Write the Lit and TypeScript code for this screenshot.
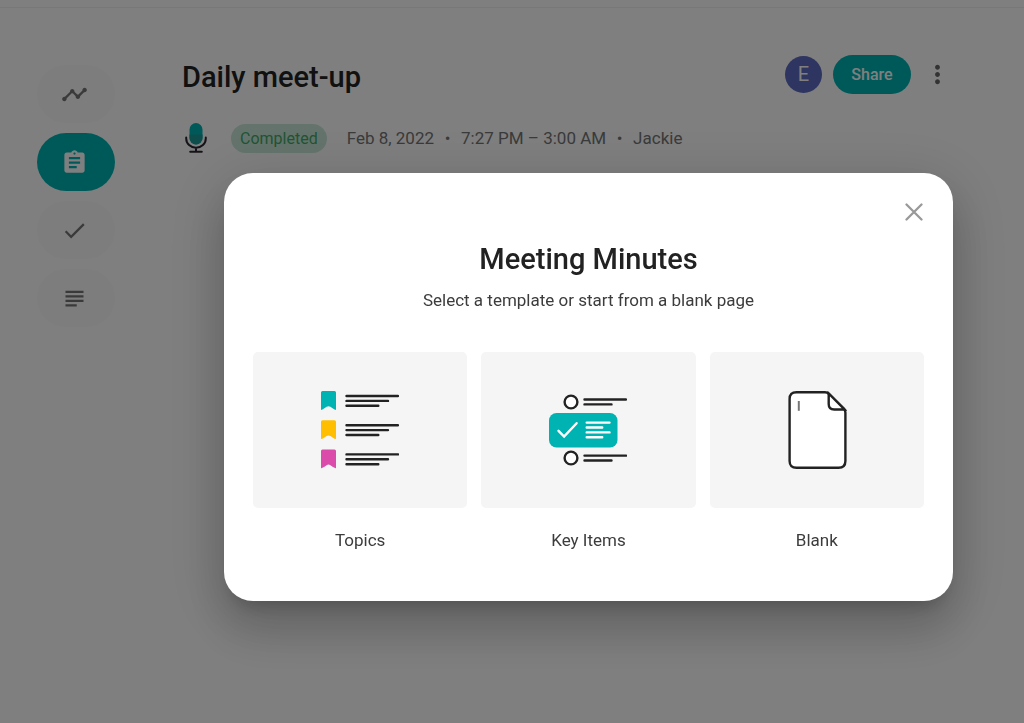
import { LitElement, html, css, svg } from "lit";
import { customElement, property } from "lit/decorators.js";

const navItems = [
  { label: "Insights", d: "M23 8c0 1.1-.9 2-2 2-.18 0-.35-.02-.51-.07l-3.56 3.55c.05.16.07.34.07.52 0 1.1-.9 2-2 2s-2-.9-2-2c0-.18.02-.36.07-.52l-2.55-2.55c-.16.05-.34.07-.52.07s-.36-.02-.52-.07l-4.55 4.56c.05.16.07.33.07.51 0 1.1-.9 2-2 2s-2-.9-2-2 .9-2 2-2c.18 0 .35.02.51.07l4.56-4.55C8.02 9.36 8 9.18 8 9c0-1.1.9-2 2-2s2 .9 2 2c0 .18-.02.36-.07.52l2.55 2.55c.16-.05.34-.07.52-.07s.36.02.52.07l3.55-3.56C19.02 8.35 19 8.18 19 8c0-1.1.9-2 2-2s2 .9 2 2z" },
  { label: "Minutes", current: true, d: "M19 3h-4.18C14.4 1.84 13.3 1 12 1c-1.3 0-2.4.84-2.82 2H5c-1.1 0-2 .9-2 2v14c0 1.1.9 2 2 2h14c1.1 0 2-.9 2-2V5c0-1.1-.9-2-2-2zm-7 0c.55 0 1 .45 1 1s-.45 1-1 1-1-.45-1-1 .45-1 1-1zm2 14H7v-2h7v2zm3-4H7v-2h10v2zm0-4H7V7h10v2z" },
  { label: "Action items", d: "M9 16.17 4.83 12l-1.42 1.41L9 19 21 7l-1.41-1.41z" },
  { label: "Transcript", d: "M14 17H4v2h10v-2zm6-8H4v2h16V9zM4 15h16v-2H4v2zM4 5v2h16V5H4z" },
];

const topicRow = (y: number, fill: string) => svg`
  <path fill=${fill} d="M1.5 ${y} h12 a1.5 1.5 0 0 1 1.5 1.5 v16.6 q0 1.2 -1 .6 q-2.6 -1.2 -4.6 -2.9 q-1.9 -1.2 -3.8 0 q-2 1.7 -4.6 2.9 q-1 .6 -1 -.6 v-16.6 a1.5 1.5 0 0 1 1.5 -1.5z"/>
  <path class="ink" d="M25.5 ${y + 5}h51.5M25.5 ${y + 9.9}h41.5M25.5 ${y + 14.8}h31.8"/>`;

const pictures = {
  topics: html`<svg width="78" height="78" viewBox="0 0 78 78" aria-hidden="true">
    ${topicRow(0, "#00b3b3")}${topicRow(29.2, "#ffbf00")}${topicRow(58.4, "#db4caa")}
  </svg>`,
  items: html`<svg width="78" height="78" viewBox="0 0 78 78" aria-hidden="true">
    <rect y="22" width="68.5" height="34.5" rx="7.5" fill="#00b3b3"/>
    <circle class="ink page" cx="22" cy="11" r="6.4"/>
    <circle class="ink page" cx="22" cy="67" r="6.4"/>
    <path class="ink" d="M35.5 8.5h41.5M35.5 13.4h27M35.5 64.6h41.5M35.5 69.5h27"/>
    <path class="white" d="M9.5 39.8l5.6 5.7 12.5-13.3M37.7 31.6h22.8M37.7 36.5h15.5M37.7 41.4h22.8M37.7 46.3h15.5"/>
  </svg>`,
  blank: html`<svg width="60" height="78" viewBox="-1.5 0 60 78" aria-hidden="true">
    <path class="ink page" d="M8 1.2H36.5q2.2 0 3.8 1.6L55.3 17.7q1.600 1.6 1.6 4V70q0 6.800-6.9 6.800H8Q1.1 76.800 1.1 70V8Q1.1 1.2 8 1.2z"/>
    <path class="ink page" d="M40.2 2.5V13q0 5.5 5.5 5.5H56z"/>
    <path d="M10.3 10v9.8" stroke="#777" stroke-width="2"/>
  </svg>`,
};

@customElement("template-card")
class TemplateCard extends LitElement {
  @property() label = "";
  @property() picture: keyof typeof pictures = "blank";

  static styles = css`
    :host { display: block; }
    .card {
      display: block; width: 100%; padding: 0; border: 0; background: none;
      font: inherit; color: #3c3c3c; cursor: pointer;
    }
    .preview {
      display: flex; align-items: center; justify-content: center;
      height: 156px; border-radius: 5px; background: #f5f5f5;
    }
    .label { display: block; margin-top: 20px; line-height: 24px; }
    .ink { stroke: #222; stroke-width: 2.4; stroke-linecap: round; fill: none; }
    .page { fill: #fff; }
    .white { stroke: #fff; stroke-width: 2.4; stroke-linecap: round; fill: none; }
  `;

  render() {
    return html`<button class="card" type="button">
      <span class="preview">${pictures[this.picture]}</span>
      <span class="label">${this.label}</span>
    </button>`;
  }
}

@customElement("app-root")
class AppRoot extends LitElement {
  static styles = css`
    :host {
      display: block; min-height: 100vh; background: #fff; color: #222;
      font: 17px/24px Roboto, sans-serif;
    }
    * { box-sizing: border-box; }
    button { font: inherit; border: 0; cursor: pointer; }
    .topbar { height: 8px; border-bottom: 1px solid #f0f0f0; }
    .page { display: flex; gap: 67px; padding: 47px 72px 0 37px; }
    .nav { display: flex; flex-direction: column; gap: 10px; padding-top: 10px; }
    .nav-link {
      display: flex; align-items: center; justify-content: center;
      width: 78px; height: 58px; padding-right: 4px; border-radius: 29px;
      background: #fafafa; color: #757575;
    }
    .nav-link.current { background: #00b3b3; color: #fff; }
    .main { flex: 1; min-width: 0; }
    .header { display: flex; align-items: center; height: 39px; }
    .title { flex: 1; margin: 0; padding-top: 5px; font-size: 29px; line-height: 36px; font-weight: 500; }
    .avatar {
      width: 37px; height: 37px; border-radius: 50%; background: #5c6bc0; color: #fff;
      font-size: 20px; line-height: 37px; text-align: center;
    }
    .share {
      width: 78px; height: 39px; margin: 0 12px 0 11px; border-radius: 20px; padding: 0;
      background: #00b3b3; color: #fff; font-size: 16px; font-weight: 500;
    }
    .more { display: flex; padding: 0; background: none; color: #666; }
    .meta { display: flex; align-items: center; height: 30px; margin-top: 29px; color: #757575; }
    .mic { margin: 0 24px 0 3px; }
    .badge {
      margin-right: 20px; padding: 0 9px; border-radius: 15px; background: #c9e9da;
      color: #43a867; font-size: 16px; line-height: 29px;
    }
    .dot { width: 27px; text-align: center; }
    .overlay {
      position: fixed; inset: 0; padding: 173px 71px 0 224px; background: rgba(0, 0, 0, 0.5);
    }
    .dialog {
      padding: 20px 29px 49px; border-radius: 29px; background: #fff;
      box-shadow: 0 13px 18px -9px rgba(0, 0, 0, 0.2), 0 29px 46px 4px rgba(0, 0, 0, 0.14),
        0 11px 56px 10px rgba(0, 0, 0, 0.12);
    }
    .close {
      display: flex; align-items: center; justify-content: center; width: 38px; height: 38px;
      margin-left: auto; margin-right: -9px; padding: 0; background: none;
    }
    .heading {
      margin: 10px 0 0; font-size: 29px; line-height: 36px; font-weight: 500; text-align: center;
    }
    .hint { margin: 11px 0 40px; text-align: center; color: #3c3c3c; }
    .cards { display: grid; grid-template-columns: repeat(3, 1fr); gap: 14px; }
  `;

  render() {
    return html`
      <div class="topbar"></div>
      <div class="page">
        <nav class="nav" aria-label="Meeting sections">
          ${navItems.map((item) => html`
            <a class="nav-link ${item.current ? "current" : ""}" href="#" aria-label=${item.label}>
              <svg width="27" height="27" viewBox="0 0 24 24" fill="currentColor">
                <path d=${item.d} />
              </svg>
            </a>`)}
        </nav>
        <main class="main">
          <header class="header">
            <h1 class="title">Daily meet-up</h1>
            <span class="avatar">E</span>
            <button class="share" type="button">Share</button>
            <button class="more" type="button" aria-label="More options">
              <svg width="29" height="29" viewBox="0 0 24 24" fill="currentColor">
                <path d="M12 8c1.1 0 2-.9 2-2s-.9-2-2-2-2 .9-2 2 .9 2 2 2zm0 2c-1.1 0-2 .9-2 2s.9 2 2 2 2-.9 2-2-.9-2-2-2zm0 6c-1.1 0-2 .9-2 2s.9 2 2 2 2-.9 2-2-.9-2-2-2z" />
              </svg>
            </button>
          </header>
          <div class="meta">
            <svg class="mic" width="22" height="30" viewBox="0 0 22 30" aria-hidden="true">
              <rect x="4.5" y="0" width="13" height="21.5" rx="6.5" fill="#00b3b3" />
              <path d="M4.5 11.5h13V15a6.5 6.5 0 0 1-13 0z" fill="#1a9c9a" />
              <path d="M1.2 14.5v1a9.8 9.3 0 0 0 19.6 0v-1M11 25v3.6M5.2 28.8h11.6" fill="none" stroke="#2b2730" stroke-width="2" stroke-linecap="round" />
            </svg>
            <span class="badge">Completed</span>
            <span>Feb 8, 2022</span><span class="dot">•</span>
            <span>7:27 PM – 3:00 AM</span><span class="dot">•</span>
            <span>Jackie</span>
          </div>
        </main>
      </div>
      <div class="overlay">
        <section class="dialog" role="dialog" aria-modal="true" aria-labelledby="heading">
          <button class="close" type="button" aria-label="Close">
            <svg width="18" height="18" viewBox="0 0 18 18">
              <path d="M1.5 1.5l15 15M16.5 1.5l-15 15" stroke="#999" stroke-width="2.3" stroke-linecap="round" />
            </svg>
          </button>
          <h2 class="heading" id="heading">Meeting Minutes</h2>
          <p class="hint">Select a template or start from a blank page</p>
          <div class="cards">
            <template-card label="Topics" picture="topics"></template-card>
            <template-card label="Key Items" picture="items"></template-card>
            <template-card label="Blank" picture="blank"></template-card>
          </div>
        </section>
      </div>`;
  }
}
